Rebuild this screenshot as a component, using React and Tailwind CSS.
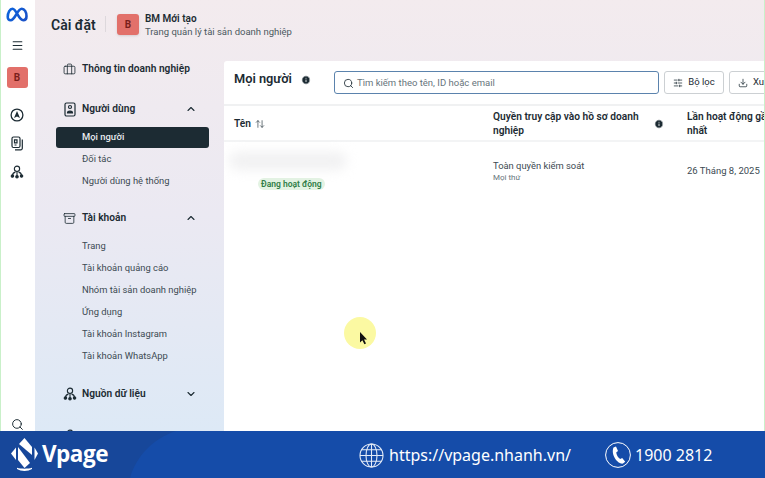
import React from "react";
import { Search, ChevronUp, ChevronDown, Menu, Info, ArrowUpDown, SlidersHorizontal, Download, Briefcase, Archive } from "lucide-react";

const Meta = () => (
  <svg width="22" height="15" viewBox="0 0 44 30" fill="none">
    <defs>
      <linearGradient id="mg" x1="0" y1="0" x2="44" y2="30" gradientUnits="userSpaceOnUse">
        <stop offset="0" stopColor="#0a66e0" />
        <stop offset="1" stopColor="#1c4fc4" />
      </linearGradient>
    </defs>
    <path d="M3.5 20C3.5 11 8 3.5 13 3.5c8 0 12 23 21.500 23 4.500 0 6.500-3.500 6.500-8C41 10 37 3.500 31.500 3.500 23 3.500 18 26.500 9.500 26.500c-4 0-6-2.500-6-6.500z" stroke="url(#mg)" strokeWidth="5.2" />
  </svg>
);

const Person = () => (
  <svg width="14" height="15" viewBox="0 0 14 15" fill="none" stroke="#1c2b33" strokeWidth="1.2">
    <rect x="2" y="1" width="10" height="13" rx="1.5" />
    <circle cx="7" cy="5" r="1.5" />
    <path d="M4.500 11c0-2.500 5-2.500 5 0z" fill="#1c2b33" />
  </svg>
);

const Nodes = ({ size = 14 }) => (
  <svg width={size} height={size} viewBox="0 0 16 16" fill="none" stroke="#1c2b33" strokeWidth="1.3">
    <circle cx="8" cy="4.300" r="3" />
    <path d="M8 7.500V12M3 11.500c0-2.300 2-3 3.200-3.300M13 11.500c0-2.300-2-3-3.200-3.300" />
    <circle cx="2.800" cy="12.500" r="1.400" fill="#1c2b33" />
    <circle cx="8" cy="13.500" r="1.400" fill="#1c2b33" />
    <circle cx="13.200" cy="12.500" r="1.400" fill="#1c2b33" />
  </svg>
);

const Compass = () => (
  <svg width="14" height="14" viewBox="0 0 14 14" fill="none">
    <circle cx="7" cy="7" r="5.900" stroke="#1c2b33" strokeWidth="1.300" />
    <path d="M7 3l3 7-3-1.400L4 10z" fill="#1c2b33" />
  </svg>
);

const Docs = () => (
  <svg width="13" height="15" viewBox="0 0 13 15" fill="none" stroke="#1c2b33" strokeWidth="1.200">
    <rect x="1" y="1" width="8" height="10.500" rx="1.500" />
    <path d="M11.300 3.500v8.800a1.500 1.500 0 0 1-1.500 1.500H4" />
    <path d="M3.500 3.800h2.500v3h-2.500zM3.500 9h2" />
  </svg>
);

const Cursor = () => (
  <svg width="9" height="13" viewBox="0 0 9 13">
    <path d="M1 0l7 7.500H5l2 4-1.600.8-2-4L1 10.500z" fill="#111" />
  </svg>
);

const VLogo = () => (
  <svg width="27" height="33" viewBox="0 0 27 33" fill="#fff" className="shrink-0">
    <path d="M0 15.500L5 9.500V22z" />
    <path d="M8 6L13.500 0 21 9V17z" />
    <path d="M7 9L19 25 13.500 30 7 22z" />
    <path d="M23.500 9.500L27 15.500 23.500 22z" />
    <path d="M6 29.800C10 31 17 31 21 29.800V31C17 33.500 10 33.500 6 31z" />
  </svg>
);

const GlobeGrid = () => (
  <svg width="25" height="25" viewBox="0 0 25 25" fill="none" stroke="#e4ebf7" strokeWidth="1.100" className="shrink-0">
    <circle cx="12.500" cy="12.500" r="11.500" />
    <ellipse cx="12.500" cy="12.500" rx="5.500" ry="11.500" />
    <path d="M12.500 1v23M1 12.500h23M2.500 6.800h20M2.500 18.200h20" />
  </svg>
);

const PhoneRing = () => (
  <svg width="26" height="26" viewBox="0 0 26 26" fill="none" className="shrink-0">
    <circle cx="13" cy="13" r="12.400" stroke="#fff" strokeWidth="1" />
    <path d="M8.500 5.500l2.500-1 2 4.500-1.800 1.500c.3 2.500 1.800 5 4 6.500l2-1 3 3.800-2.200 1.800C13 22.500 5.500 13 8.500 5.500z" fill="#fff" />
  </svg>
);

const SubItem = ({ children, active }) => (
  <div
    className={
      "flex h-[21px] items-center rounded-[3px] pl-[26px] text-[9.4px] " +
      (active ? "bg-[#1c2b33] font-medium text-[#e8ecef]" : "text-[#3c4a52]")
    }
  >
    {children}
  </div>
);

const SectionHead = ({ icon, chevron, children }) => (
  <div className="flex h-5 items-center text-[10.200px] font-semibold text-[#1c2b33]">
    <div className="flex w-[26px] justify-start pl-[7px]">{icon}</div>
    <span className="flex-1">{children}</span>
    {chevron && <div className="pr-[12px]">{chevron}</div>}
  </div>
);

export default function App() {
  return (
    <div
      className="relative flex h-[478px] w-[765px] flex-col overflow-hidden bg-white text-[#1c2b33]"
      style={{ fontFamily: "Roboto, 'Noto Sans', sans-serif" }}
    >
      <div className="flex h-[431px] overflow-hidden border-l border-r border-[#c9f0c9]">
        {/* rail */}
        <div className="flex w-[34px] shrink-0 flex-col items-center bg-white pt-[7px] pr-[2px]">
          <Meta />
          <Menu size={13} strokeWidth={2} className="mt-[17px] text-[#1c2b33]" />
          <div className="mt-[15px] flex h-[21px] w-[21px] items-center justify-center rounded-[3px] bg-[#e2706a] text-[10px] font-bold text-[#7a1f1c]">
            B
          </div>
          <div className="mt-[20px]"><Compass /></div>
          <div className="mt-[14px]"><Docs /></div>
          <div className="mt-[14px]"><Nodes /></div>
          <Search size={13} strokeWidth={1.8} className="mt-auto text-[#1c2b33]" />
        </div>

        {/* body */}
        <div className="flex min-w-0 flex-1 flex-col bg-gradient-to-b from-[#f3ebee] via-[#ebe9f2] to-[#dde9f6]">
          <div className="flex h-[61px] shrink-0 items-start pl-[16px] pt-[14px]">
            <span className="mt-[2px] w-[43px] whitespace-nowrap text-[14px] font-semibold leading-[18px]">Cài đặt</span>
            <div className="ml-[11px] mr-[11px] mt-[2px] h-[16px] w-px bg-[#ddd8dc]" />
            <div className="flex h-[21px] w-[22px] items-center justify-center rounded-[3px] bg-[#e2706a] text-[10px] font-bold text-[#7a1f1c] shadow-sm">
              B
            </div>
            <div className="ml-[6px] mt-[-2px] leading-[13px]">
              <div className="text-[10px] font-semibold">BM Mới tạo</div>
              <div className="text-[9.5px] text-[#4b5960]">Trang quản lý tài sản doanh nghiệp</div>
            </div>
          </div>

          <div className="flex min-h-0 flex-1">
            {/* nav */}
            <div className="mt-[-2px] w-[189px] shrink-0 pl-[21px] pr-[15px]">
              <SectionHead icon={<Briefcase size={13} strokeWidth={1.5} />}>Thông tin doanh nghiệp</SectionHead>
              <div className="mt-[20px]">
                <SectionHead icon={<Person />} chevron={<ChevronUp size={12} strokeWidth={2.2} />}>Người dùng</SectionHead>
              </div>
              <div className="mt-[8px] flex flex-col gap-px">
                <SubItem active>Mọi người</SubItem>
                <SubItem>Đối tác</SubItem>
                <SubItem>Người dùng hệ thống</SubItem>
              </div>
              <div className="mt-[16px]">
                <SectionHead icon={<Archive size={13} strokeWidth={1.5} />} chevron={<ChevronUp size={12} strokeWidth={2.2} />}>Tài khoản</SectionHead>
              </div>
              <div className="mt-[8px] flex flex-col gap-px">
                <SubItem>Trang</SubItem>
                <SubItem>Tài khoản quảng cáo</SubItem>
                <SubItem>Nhóm tài sản doanh nghiệp</SubItem>
                <SubItem>Ứng dụng</SubItem>
                <SubItem>Tài khoản Instagram</SubItem>
                <SubItem>Tài khoản WhatsApp</SubItem>
              </div>
              <div className="mt-[17px]">
                <SectionHead icon={<Nodes />} chevron={<ChevronDown size={12} strokeWidth={2.2} />}>Nguồn dữ liệu</SectionHead>
              </div>
              <div className="mt-[25px] pl-[7px]"><Nodes /></div>
            </div>

            {/* panel */}
            <div className="min-w-0 flex-1 overflow-hidden rounded-tl-[3px] bg-white">
              <div className="flex h-[45px] items-center whitespace-nowrap border-b-2 border-[#f0f1f2] pl-[10px]">
                <span className="mt-[-7px] w-[67px] shrink-0 text-[12.800px] font-semibold">Mọi người</span>
                <Info size={10} fill="#1c2b33" stroke="#fff" strokeWidth={2} className="mt-[-5px] shrink-0" />
                <div className="ml-[23px] flex h-[23px] w-[325px] shrink-0 items-center rounded-[3px] border border-[#5b83ad] pl-[8px] pt-[1px] text-[9.5px] text-[#67757c]">
                  <Search size={11} strokeWidth={1.8} className="mr-[3px] text-[#1c2b33]" />
                  Tìm kiếm theo tên, ID hoặc email
                </div>
                <div className="ml-[5px] flex h-[23px] w-[60px] shrink-0 items-center justify-center gap-[5px] rounded-[3px] border border-[#ccd0d3] text-[9.5px]">
                  <SlidersHorizontal size={10} strokeWidth={1.8} />
                  Bộ lọc
                </div>
                <div className="ml-[5px] flex h-[23px] w-[60px] shrink-0 items-center gap-[5px] rounded-[3px] border border-[#ccd0d3] pl-[8px] text-[9.5px]">
                  <Download size={10} strokeWidth={1.8} />
                  Xuất
                </div>
              </div>

              <div className="flex h-[36px] items-center whitespace-nowrap border-b-2 border-[#f3f4f5] pt-[1px] text-[10.200px] font-semibold leading-[14px]">
                <div className="flex w-[269px] shrink-0 items-center gap-[4px] pl-[10px]">
                  Tên <ArrowUpDown size={10} strokeWidth={1.8} className="text-[#3c4a52]" />
                </div>
                <div className="w-[161px] shrink-0 whitespace-normal">Quyền truy cập vào hồ sơ doanh nghiệp</div>
                <Info size={10} fill="#1c2b33" stroke="#fff" strokeWidth={2} className="shrink-0" />
                <div className="ml-[23px] w-[90px] shrink-0">
                  Lần hoạt động gần<br />nhất
                </div>
              </div>

              <div className="flex whitespace-nowrap pt-[10px]">
                <div className="w-[269px] shrink-0">
                  <div className="ml-[5px] h-[18px] w-[118px] rounded-full bg-[#f1f1f2] blur-[6px]" />
                  <div className="ml-[34px] mt-[-4px] inline-flex h-[12px] items-center rounded-full bg-[#e3f3e3] px-[3px] text-[8.500px] font-semibold text-[#2f7d46]">
                    Đang hoạt động
                  </div>
                </div>
                <div className="w-[194px] shrink-0 pt-[8px]">
                  <div className="text-[9.4px] leading-[12px] text-[#3c4a52]">Toàn quyền kiểm soát</div>
                  <div className="text-[8px] leading-[12px] text-[#67757c]">Mọi thứ</div>
                </div>
                <div className="pt-[13px] text-[9.5px] leading-[12px] text-[#3c4a52]">26 Tháng 8, 2025</div>
              </div>
            </div>
          </div>
        </div>
      </div>

      {/* footer */}
      <div className="relative flex h-[47px] shrink-0 items-center bg-[#154ca9] text-white">
        <svg className="absolute inset-0" width="765" height="47" viewBox="0 0 765 47">
          <path d="M0 0H176C152 8 136 26 130 47H0z" fill="#17479a" />
        </svg>
        <div className="relative ml-[11px] flex w-[348px] shrink-0 items-center gap-[4px]">
          <VLogo />
          <span className="text-[22.500px] font-bold leading-none tracking-[-0.5px]" style={{ fontFamily: "'Open Sans', sans-serif" }}>Vpage</span>
        </div>
        <div className="relative flex items-center gap-[5px] pt-[1px]" style={{ fontFamily: "'Noto Sans', sans-serif" }}>
          <GlobeGrid />
          <span className="text-[16px]">https://vpage.nhanh.vn/</span>
          <div className="ml-[29px]"><PhoneRing /></div>
          <span className="ml-[-1px] text-[16px]">1900 2812</span>
        </div>
      </div>

      {/* cursor highlight */}
      <div className="absolute left-[344px] top-[317px] h-[32px] w-[32px] rounded-full bg-[#fbf9a2] blur-[0.5px]" />
      <div className="absolute left-[359px] top-[332px]"><Cursor /></div>
    </div>
  );
}
